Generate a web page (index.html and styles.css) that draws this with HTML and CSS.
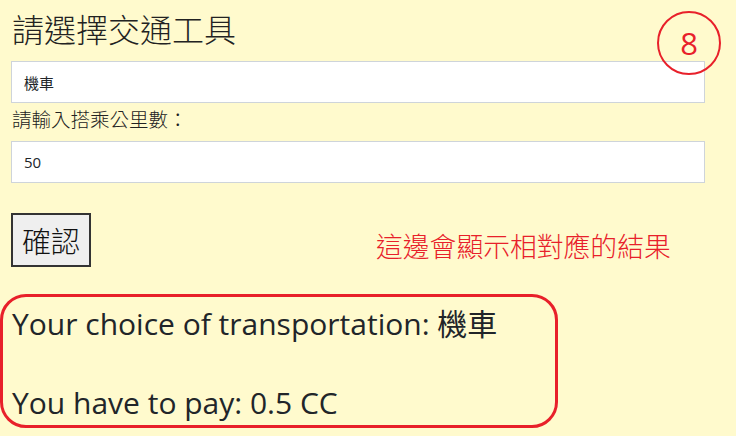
FILE: index.html
```html
<!DOCTYPE html>
<html lang="zh-Hant">
<head>
<meta charset="utf-8">
<title>交通工具</title>
<link rel="stylesheet" href="styles.css">
</head>
<body>
<div class="page">
  <h1 class="title">請選擇交通工具</h1>
  <div class="field">機車</div>
  <label class="label">請輸入搭乘公里數：</label>
  <div class="field">50</div>
  <div class="action-row">
    <button class="confirm">確認</button>
    <span class="note">這邊會顯示相對應的結果</span>
  </div>
  <div class="result">
    <p class="result-line">Your choice of transportation: 機車</p>
    <p class="result-line second">You have to pay: 0.5 CC</p>
  </div>
  <div class="badge">8</div>
</div>
</body>
</html>
```
FILE: styles.css
```css
html, body {
  margin: 0;
  padding: 0;
  background: #fffacd;
}
body {
  font-family: "Open Sans", "Noto Sans CJK TC", sans-serif;
  color: #212529;
}
.page {
  position: relative;
  padding: 9px 31px 0 11px;
  display: flex;
  flex-direction: column;
}
.title {
  margin: 0 0 14px 1px;
  font-family: "Noto Sans CJK TC", sans-serif;
  font-weight: 300;
  font-size: 32px;
  line-height: 38px;
  color: #222;
}
.field {
  height: 42px;
  box-sizing: border-box;
  border: 1px solid #ced4da;
  background: #fff;
  padding: 0 12px;
  display: flex;
  align-items: center;
  font-size: 15px;
  font-family: "Open Sans", "Noto Sans CJK TC", sans-serif;
  color: #212529;
}
.label {
  margin: 4px 0 10px 1px;
  font-family: "Noto Sans CJK TC", sans-serif;
  font-weight: 300;
  font-size: 19.5px;
  line-height: 24px;
  color: #222;
}
.action-row {
  margin-top: 30px;
  display: flex;
  align-items: flex-end;
}
.confirm {
  margin: 0;
  width: 80px;
  height: 54px;
  padding: 0;
  border: 2px solid #333;
  background: #efefef;
  font-family: "Noto Sans CJK TC", sans-serif;
  font-weight: 300;
  font-size: 29px;
  line-height: 36px;
  color: #111;
}
.note {
  margin-left: 285px;
  margin-bottom: 5px;
  font-family: "Noto Sans CJK TC", sans-serif;
  font-weight: 300;
  font-size: 26.8px;
  line-height: 32px;
  color: #e8202a;
}
.result {
  margin: 27px 0 0 -11px;
  width: 558px;
  box-sizing: border-box;
  border: 3px solid #e8202a;
  border-radius: 26px;
  padding: 9px 0 4px 9px;
}
.result-line {
  margin: 0;
  font-size: 30px;
  line-height: 36px;
  color: #212529;
  white-space: nowrap;
}
.result-line.second {
  margin-top: 43px;
}
.badge {
  position: absolute;
  left: 657px;
  top: 11px;
  width: 64px;
  height: 64px;
  box-sizing: border-box;
  border: 2.5px solid #e8202a;
  border-radius: 50%;
  display: flex;
  align-items: center;
  justify-content: center;
  font-family: "Open Sans", sans-serif;
  font-size: 31px;
  color: #e8202a;
}
```
